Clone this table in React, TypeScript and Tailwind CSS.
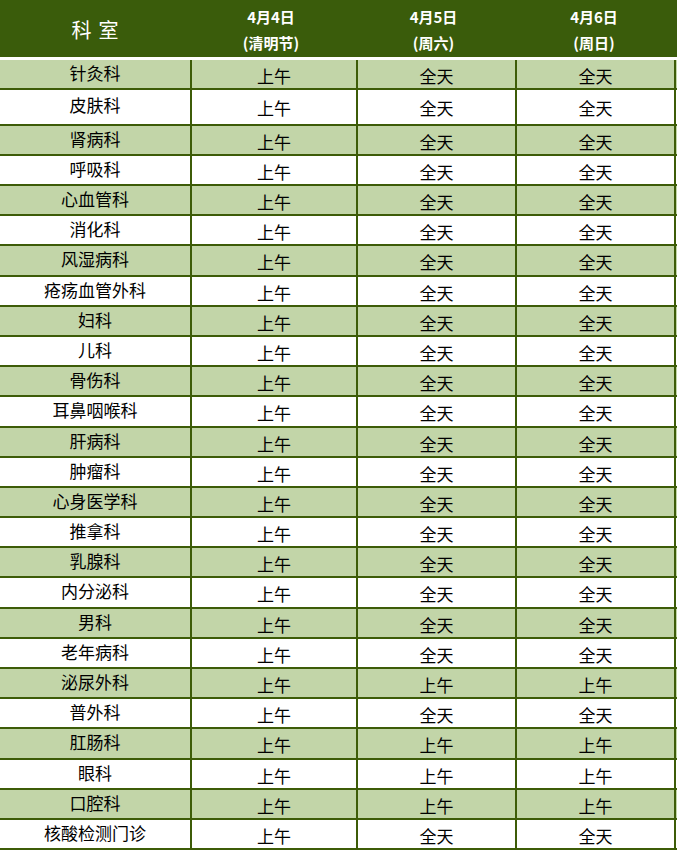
import React from 'react';

const rows: [string, string, string, string][] = [
    ['针灸科', '上午', '全天', '全天'],
    ['皮肤科', '上午', '全天', '全天'],
    ['肾病科', '上午', '全天', '全天'],
    ['呼吸科', '上午', '全天', '全天'],
    ['心血管科', '上午', '全天', '全天'],
    ['消化科', '上午', '全天', '全天'],
    ['风湿病科', '上午', '全天', '全天'],
    ['疮疡血管外科', '上午', '全天', '全天'],
    ['妇科', '上午', '全天', '全天'],
    ['儿科', '上午', '全天', '全天'],
    ['骨伤科', '上午', '全天', '全天'],
    ['耳鼻咽喉科', '上午', '全天', '全天'],
    ['肝病科', '上午', '全天', '全天'],
    ['肿瘤科', '上午', '全天', '全天'],
    ['心身医学科', '上午', '全天', '全天'],
    ['推拿科', '上午', '全天', '全天'],
    ['乳腺科', '上午', '全天', '全天'],
    ['内分泌科', '上午', '全天', '全天'],
    ['男科', '上午', '全天', '全天'],
    ['老年病科', '上午', '全天', '全天'],
    ['泌尿外科', '上午', '上午', '上午'],
    ['普外科', '上午', '全天', '全天'],
    ['肛肠科', '上午', '上午', '上午'],
    ['眼科', '上午', '上午', '上午'],
    ['口腔科', '上午', '上午', '上午'],
    ['核酸检测门诊', '上午', '全天', '全天'],
];

// row pitch in px (includes bottom rule)
const heights = [30, 36, 30, 30, 30, 30, 31, 30, 30, 30, 30, 31, 30, 30, 30, 30, 30, 31, 30, 30, 30, 30, 31, 30, 30, 30];

const dates = [
    ['4月4日', '(清明节)'],
    ['4月5日', '(周六)'],
    ['4月6日', '(周日)'],
];

export default function App() {
    return (
        <div className="w-[677px] bg-white text-black" style={{ fontFamily: '"Microsoft YaHei", "Noto Sans CJK SC", sans-serif' }}>
            <div className="grid grid-cols-[190px_166px_159px_162px] h-[57px] bg-[#3a5c0b] text-white">
                <div className="flex items-center justify-center text-[20px] tracking-[7px] pl-[7px] pt-[2px]">科室</div>
                {dates.map(([d, n]) => (
                    <div key={d} className="flex flex-col items-center justify-center gap-[8px] text-[15px] font-bold leading-[18px] pr-[4px] pt-[2px]">
                        <span>{d}</span>
                        <span>{n}</span>
                    </div>
                ))}
            </div>
            <div className="h-[3px]" />
            {rows.map((r, i) => (
                <div
                    key={r[0]}
                    style={{ height: heights[i] }}
                    className={`grid grid-cols-[190px_166px_159px_162px] border-b-2 border-[#3d5c08] text-[17px] ${i % 2 === 0 ? 'bg-[#c2d5a8]' : 'bg-white'}`}
                >
                    <div className="flex items-center justify-center pb-[4px]">{r[0]}</div>
                    <div className="flex items-center justify-center border-l-2 border-[#3d5c08] pt-[1px]">{r[1]}</div>
                    <div className="flex items-center justify-center border-l-2 border-[#3d5c08] pt-[1px]">{r[2]}</div>
                    <div className="flex items-center justify-center border-l-2 border-r-2 border-[#3d5c08] pt-[1px] mr-[1px]">{r[3]}</div>
                </div>
            ))}
        </div>
    );
}
